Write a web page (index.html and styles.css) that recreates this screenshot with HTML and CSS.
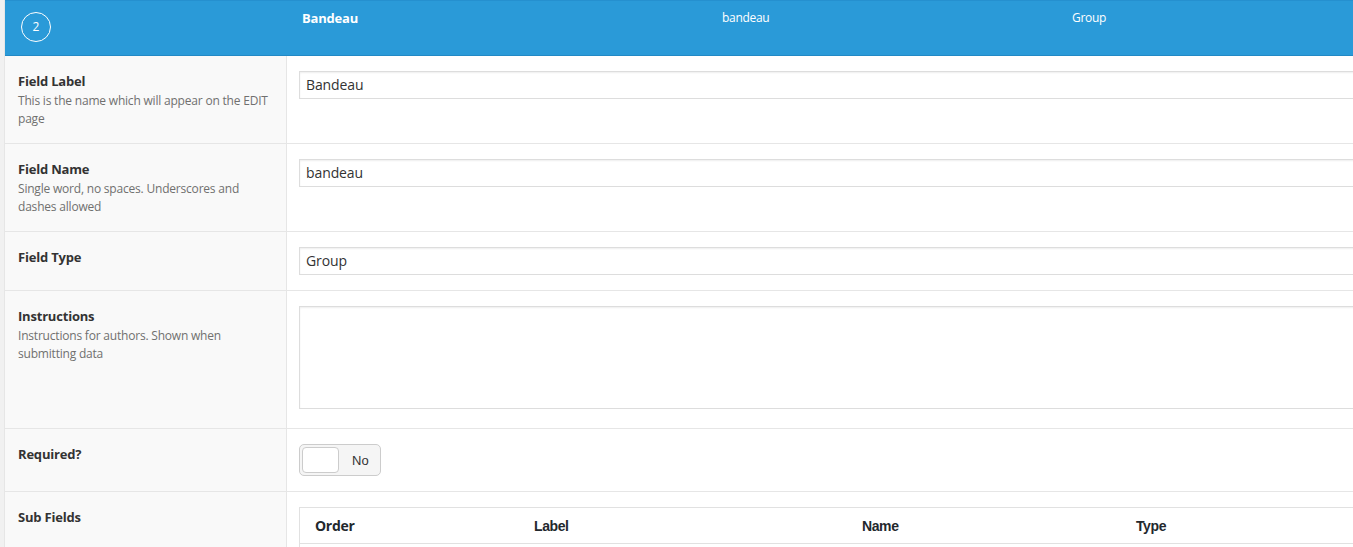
FILE: index.html
```html
<!DOCTYPE html>
<html>
<head>
<meta charset="utf-8">
<link rel="stylesheet" href="styles.css">
</head>
<body>
<div class="page">
  <div class="strip"></div>
  <div class="field">
    <div class="field-head">
      <div class="head-order"><span class="badge">2</span></div>
      <div class="head-col head-label">Bandeau</div>
      <div class="head-col head-name">bandeau</div>
      <div class="head-col head-type">Group</div>
    </div>
    <div class="row">
      <div class="label-cell">
        <div class="label">Field Label</div>
        <div class="desc">This is the name which will appear on the EDIT page</div>
      </div>
      <div class="input-cell"><div class="input">Bandeau</div></div>
    </div>
    <div class="row">
      <div class="label-cell">
        <div class="label">Field Name</div>
        <div class="desc">Single word, no spaces. Underscores and dashes allowed</div>
      </div>
      <div class="input-cell"><div class="input">bandeau</div></div>
    </div>
    <div class="row">
      <div class="label-cell">
        <div class="label">Field Type</div>
      </div>
      <div class="input-cell"><div class="input">Group</div></div>
    </div>
    <div class="row">
      <div class="label-cell">
        <div class="label">Instructions</div>
        <div class="desc">Instructions for authors. Shown when submitting data</div>
      </div>
      <div class="input-cell tall"><div class="textarea"></div></div>
    </div>
    <div class="row">
      <div class="label-cell">
        <div class="label">Required?</div>
      </div>
      <div class="input-cell">
        <div class="toggle"><span class="knob"></span><span class="toggle-text">No</span></div>
      </div>
    </div>
    <div class="row last">
      <div class="label-cell">
        <div class="label">Sub Fields</div>
      </div>
      <div class="input-cell">
        <div class="subtable">
          <div class="sub-head">
            <div class="sub-order">Order</div>
            <div class="sub-th">Label</div>
            <div class="sub-th">Name</div>
            <div class="sub-th">Type</div>
          </div>
          <div class="sub-body"></div>
        </div>
      </div>
    </div>
  </div>
</div>
</body>
</html>
```

FILE: styles.css
```css
html, body {
  margin: 0;
  padding: 0;
  overflow: hidden;
  background: #ffffff;
}
body {
  font-family: "Open Sans", "Noto Sans", sans-serif;
  color: #333333;
}
.page {
  display: flex;
  width: 1460px;
  min-height: 547px;
}
.strip {
  width: 5px;
  flex: none;
  background: #f1f1f1;
  border-right: 1px solid #e6e6e6;
  box-sizing: border-box;
}
.field {
  flex: 1;
  display: flex;
  flex-direction: column;
}
.field-head {
  display: grid;
  grid-template-columns: 281px 420px 350px 1fr;
  height: 56px;
  box-sizing: border-box;
  background: #2a9ad8;
  border-top: 1px solid #2590cf;
  border-bottom: 1px solid #2289c5;
  color: #ffffff;
}
.head-order {
  padding: 11px 0 0 16px;
}
.badge {
  display: flex;
  align-items: center;
  justify-content: center;
  width: 28px;
  height: 28px;
  border: 1px solid #ffffff;
  border-radius: 50%;
  font-size: 12px;
  line-height: 1;
}
.head-col {
  padding: 9px 0 0 16px;
  font-size: 12px;
  line-height: 16px;
  letter-spacing: -0.3px;
}
.head-label {
  font-weight: 700;
  font-size: 13px;
  letter-spacing: -0.2px;
}
.row {
  display: grid;
  grid-template-columns: 282px 1fr;
  border-bottom: 1px solid #e6e6e6;
}
.row.last {
  border-bottom: none;
  flex: 1;
}
.label-cell {
  background: #f9f9f9;
  border-right: 1px solid #e6e6e6;
  padding: 15px 14px 15px 13px;
}
.label {
  font-size: 13px;
  font-weight: 700;
  line-height: 20px;
  color: #333333;
  letter-spacing: -0.2px;
}
.desc {
  margin-top: 1px;
  font-size: 12px;
  line-height: 18px;
  color: #70706f;
  letter-spacing: -0.2px;
}
.input-cell {
  padding: 15px 0 15px 12px;
}
.input-cell.tall {
  padding-bottom: 19px;
}
.input {
  height: 28px;
  box-sizing: border-box;
  border: 1px solid #dddddd;
  box-shadow: inset 0 1px 2px rgba(0, 0, 0, 0.07);
  background: #ffffff;
  padding: 0 6px;
  font-size: 14px;
  line-height: 26px;
  color: #333333;
  letter-spacing: -0.1px;
}
.textarea {
  height: 103px;
  box-sizing: border-box;
  border: 1px solid #dddddd;
  box-shadow: inset 0 1px 2px rgba(0, 0, 0, 0.07);
  background: #ffffff;
}
.toggle {
  display: flex;
  align-items: center;
  width: 82px;
  height: 32px;
  box-sizing: border-box;
  border: 1px solid #cccccc;
  border-radius: 5px;
  background: #f5f5f5;
  padding: 2px;
}
.knob {
  width: 37px;
  height: 26px;
  box-sizing: border-box;
  border: 1px solid #cccccc;
  border-radius: 4px;
  background: #ffffff;
}
.toggle-text {
  margin-left: 13px;
  font-family: "Liberation Sans", Arial, sans-serif;
  font-size: 13px;
  color: #333333;
}
.subtable {
  border: 1px solid #e1e1e1;
  border-right: none;
  height: 60px;
}
.sub-head {
  display: grid;
  grid-template-columns: 219px 328px 274px 1fr;
  height: 35px;
  align-items: center;
  border-bottom: 1px solid #e1e1e1;
}
.sub-order {
  padding-left: 15px;
  font-size: 14px;
  font-weight: 700;
  color: #23282d;
  letter-spacing: -0.3px;
  line-height: 34px;
}
.sub-th {
  padding-left: 15px;
  font-family: "Liberation Sans", Arial, sans-serif;
  font-size: 14px;
  font-weight: 700;
  color: #23282d;
  letter-spacing: -0.4px;
  line-height: 34px;
}
```
